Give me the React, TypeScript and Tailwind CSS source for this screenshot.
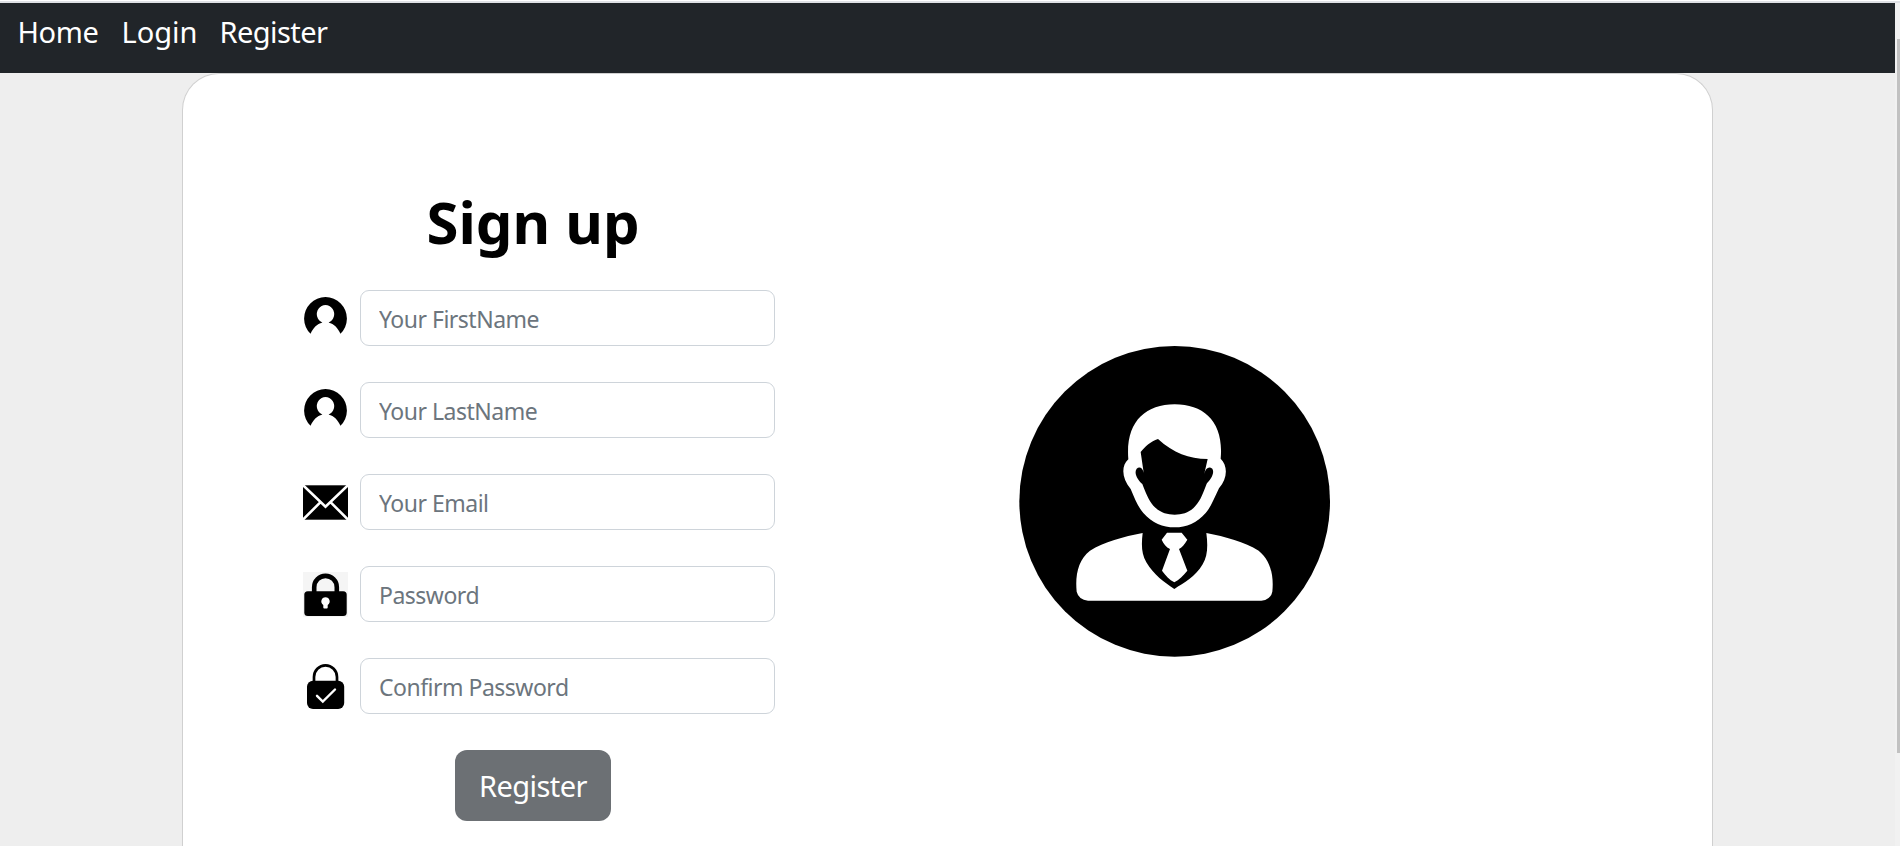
import type { ReactNode } from "react";

function PersonIcon() {
  return (
    <svg width="45" height="45" viewBox="0 0 45 45" className="block">
      <path
        fillRule="evenodd"
        d="M7.6 37.8A21.4 21.4 0 1 1 37.4 37.8C35.2 32.3 31 27.9 25.6 26.5A8.7 9 0 1 0 19.4 26.5C14 27.9 9.8 32.3 7.6 37.8Z"
      />
    </svg>
  );
}

function MailIcon() {
  return (
    <svg width="45" height="45" viewBox="0 0 45 45" className="block">
      <rect x="0" y="5.3" width="45" height="34.4" />
      <path
        d="M-0.5 4.8L22.5 26.8L45.5 4.8M-0.5 40.2L17 22.6M45.5 40.2L28 22.6"
        fill="none"
        stroke="#fff"
        strokeWidth="2.6"
      />
    </svg>
  );
}

function LockIcon() {
  return (
    <svg width="45" height="45" viewBox="0 0 45 45" className="block bg-[#f5f5f5]">
      <path d="M11.2 20V15.2A11.3 11.3 0 0 1 33.8 15.2V20" fill="none" stroke="#000" strokeWidth="4.6" />
      <rect x="1.3" y="19.2" width="42.4" height="24.8" rx="3.5" />
      <path
        d="M22.5 25.2A4.4 4.2 0 0 1 24.7 32.9V35.4Q24.7 36.4 23.7 36.4H21.3Q20.3 36.4 20.3 35.4V32.9A4.4 4.2 0 0 1 22.5 25.2Z"
        fill="#fff"
      />
    </svg>
  );
}

function LockCheckIcon() {
  return (
    <svg width="45" height="45" viewBox="0 0 45 45" className="block">
      <path d="M11 18V13A11.5 11.6 0 0 1 34 13V18" fill="none" stroke="#000" strokeWidth="2.7" />
      <rect x="4" y="16.8" width="37.2" height="28.2" rx="6" />
      <path d="M14 31.8L19.8 37.6L32 25.5" fill="none" stroke="#fff" strokeWidth="2.4" strokeLinecap="round" />
    </svg>
  );
}

function BusinessmanAvatar() {
  return (
    <svg width="350" height="340" viewBox="0 0 1050 1020" className="block">
      <ellipse cx="524" cy="514" rx="466" ry="466" />
      <path
        fill="#fff"
        d="M385 388C376 278 434 223 524 223S672 278 662 386C684 408 683 444 657 475C642 505 634 530 617 549C590 580 560 592 524 592S457 580 430 549C413 530 404 504 392 477C365 445 363 408 385 388Z"
      />
      <path d="M474 327C452 334 436 349 422 366L431 428C428 413 418 409 410 416C400 430 415 452 427 462C437 488 446 511 460 527C478 547 500 554 524 554S570 547 586 528C602 511 611 485 620 461C632 449 645 430 637 416C627 408 617 414 613 431L623 387C566 386 521 370 474 327Z" />
      <path
        fill="#fff"
        d="M428 609C370 620 312 636 270 662C235 689 225 735 230 785Q236 809 264 812H784Q812 809 817 785C822 735 811 690 776 662C734 636 676 620 619 609C624 646 623 679 608 703C586 741 552 758 523 777C494 758 461 735 439 697C424 671 424 643 428 609Z"
      />
      <path
        fill="#fff"
        d="M501 608H545L562 629C554 643 545 653 537 657L562 722C550 737 537 749 523 757C508 749 497 737 486 722L510 657C498 652 491 641 485 629Z"
      />
    </svg>
  );
}

function Field({ icon, type, placeholder }: { icon: ReactNode; type: string; placeholder: string }) {
  return (
    <div className="flex h-14 items-center gap-3 pl-3">
      {icon}
      <input
        type={type}
        placeholder={placeholder}
        className="h-14 w-[415px] rounded-[9px] border border-[#ced4da] bg-white px-[18px] pt-[2px] text-[23px] tracking-[-0.5px] text-[#212529] outline-none placeholder:text-[#6c757d]"
      />
    </div>
  );
}

export default function App() {
  return (
    <div className="flex h-[846px] w-full flex-col overflow-hidden bg-[#eee] font-['Noto_Sans','Open_Sans',sans-serif]">
      <div className="h-[3px] shrink-0 border-b-2 border-[#dfe1e5] bg-white" />
      <div className="flex min-h-0 flex-1">
        <div className="flex w-[1895px] flex-col">
          <nav className="flex h-[70px] shrink-0 items-start bg-[#212529] pt-[7px] pl-[17.5px] text-[29px] leading-[44px] text-white">
            <a href="#home" className="w-[104px] tracking-[-0.4px]">Home</a>
            <a href="#login" className="w-[98px]">Login</a>
            <a href="#register" className="tracking-[-0.55px]">Register</a>
          </nav>
          <main className="mx-auto flex min-h-0 w-[1531px] flex-1 rounded-t-[37px] border border-b-0 border-[#d0d0d0] bg-white pl-[108px]">
            <form className="flex w-[484px] flex-col pt-[112px]">
              <h1 className="h-[104px] text-center text-[58px] leading-[72px] font-bold text-black">Sign up</h1>
              <div className="flex flex-col gap-9">
                <Field icon={<PersonIcon />} type="text" placeholder="Your FirstName" />
                <Field icon={<PersonIcon />} type="text" placeholder="Your LastName" />
                <Field icon={<MailIcon />} type="email" placeholder="Your Email" />
                <Field icon={<LockIcon />} type="password" placeholder="Password" />
                <Field icon={<LockCheckIcon />} type="password" placeholder="Confirm Password" />
              </div>
              <button
                type="button"
                className="mt-9 h-[71px] w-[156px] self-center rounded-[12px] bg-[#6c7074] text-[29px] tracking-[-0.55px] text-white"
              >
                Register
              </button>
            </form>
            <div className="pt-[256px] pl-[225px]">
              <BusinessmanAvatar />
            </div>
          </main>
        </div>
        <div className="flex flex-1 flex-col bg-[#f1f1f1] pt-9 pl-[2px]">
          <div className="h-[714px] bg-[#c1c1c1]" />
        </div>
      </div>
    </div>
  );
}
